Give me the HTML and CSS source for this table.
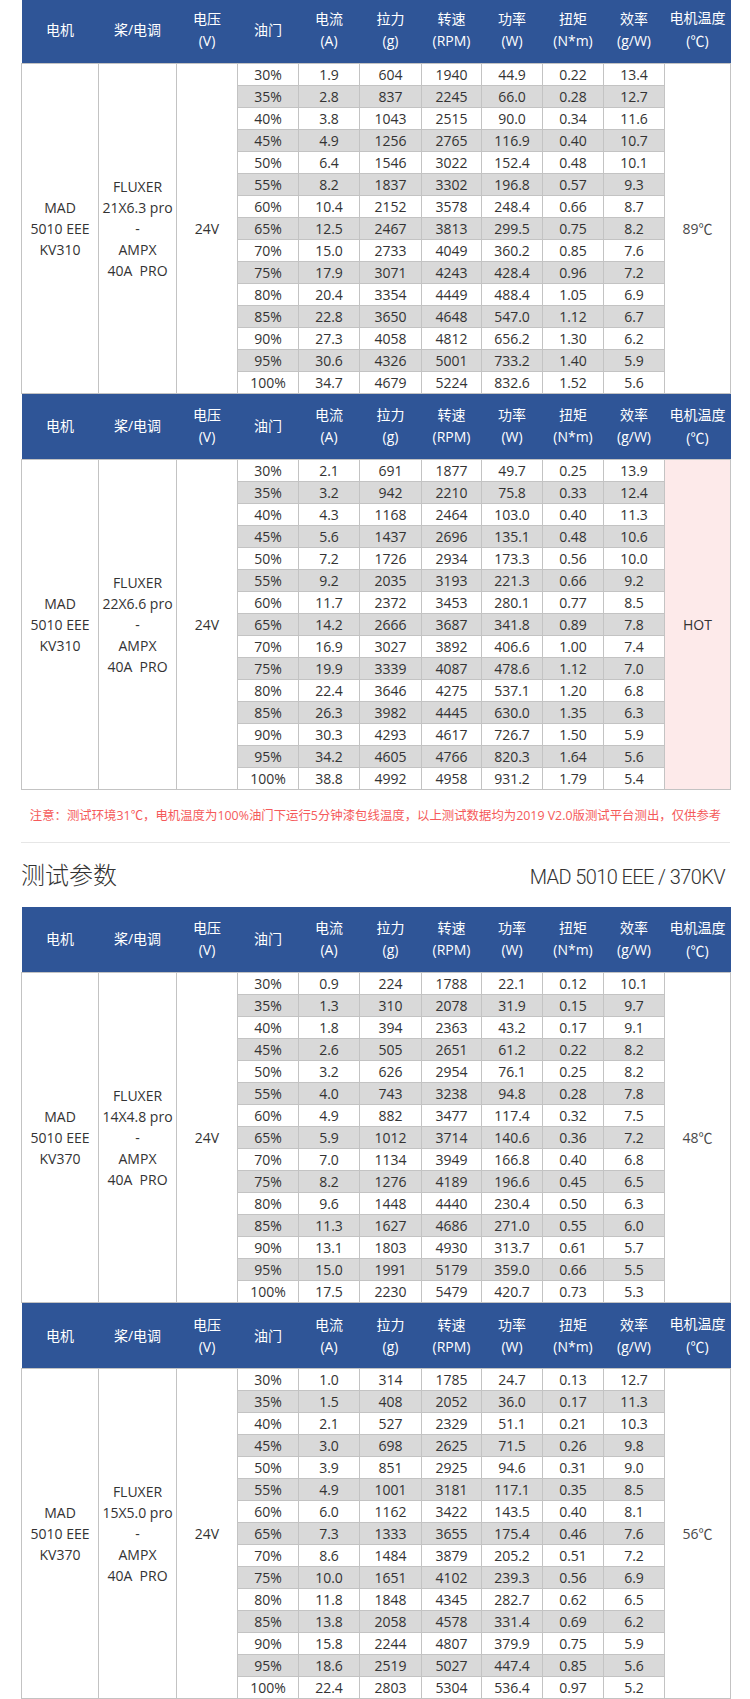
FILE: index.html
```html
<!DOCTYPE html>
<html lang="zh">
<head>
<meta charset="utf-8">
<title>测试参数</title>
<link rel="stylesheet" href="styles.css">
</head>
<body>
<div class="page">
<table class="spec">
<colgroup><col class="c-motor"><col class="c-prop"><col class="c-v"><col class="c-n"><col class="c-n"><col class="c-f"><col class="c-r"><col class="c-n"><col class="c-n"><col class="c-n"><col class="c-t"></colgroup>
<tbody>
<tr class="hd cut"><th>电机</th><th>桨/电调</th><th>电压<br>(V)</th><th>油门</th><th>电流<br>(A)</th><th>拉力<br>(g)</th><th>转速<br>(RPM)</th><th>功率<br>(W)</th><th>扭矩<br>(N*m)</th><th>效率<br>(g/W)</th><th>电机温度<br>(<span class="deg">℃</span>)</th></tr>
<tr><td rowspan="15" class="m">MAD<br>5010 EEE<br>KV310</td><td rowspan="15" class="m">FLUXER<br>21X6.3 pro<br>-<br>AMPX<br>40A&nbsp; PRO</td><td rowspan="15" class="m">24V</td><td>30%</td><td>1.9</td><td>604</td><td>1940</td><td>44.9</td><td>0.22</td><td>13.4</td><td rowspan="15" class="m temp">89<span class="deg">℃</span></td></tr>
<tr class="alt"><td>35%</td><td>2.8</td><td>837</td><td>2245</td><td>66.0</td><td>0.28</td><td>12.7</td></tr>
<tr><td>40%</td><td>3.8</td><td>1043</td><td>2515</td><td>90.0</td><td>0.34</td><td>11.6</td></tr>
<tr class="alt"><td>45%</td><td>4.9</td><td>1256</td><td>2765</td><td>116.9</td><td>0.40</td><td>10.7</td></tr>
<tr><td>50%</td><td>6.4</td><td>1546</td><td>3022</td><td>152.4</td><td>0.48</td><td>10.1</td></tr>
<tr class="alt"><td>55%</td><td>8.2</td><td>1837</td><td>3302</td><td>196.8</td><td>0.57</td><td>9.3</td></tr>
<tr><td>60%</td><td>10.4</td><td>2152</td><td>3578</td><td>248.4</td><td>0.66</td><td>8.7</td></tr>
<tr class="alt"><td>65%</td><td>12.5</td><td>2467</td><td>3813</td><td>299.5</td><td>0.75</td><td>8.2</td></tr>
<tr><td>70%</td><td>15.0</td><td>2733</td><td>4049</td><td>360.2</td><td>0.85</td><td>7.6</td></tr>
<tr class="alt"><td>75%</td><td>17.9</td><td>3071</td><td>4243</td><td>428.4</td><td>0.96</td><td>7.2</td></tr>
<tr><td>80%</td><td>20.4</td><td>3354</td><td>4449</td><td>488.4</td><td>1.05</td><td>6.9</td></tr>
<tr class="alt"><td>85%</td><td>22.8</td><td>3650</td><td>4648</td><td>547.0</td><td>1.12</td><td>6.7</td></tr>
<tr><td>90%</td><td>27.3</td><td>4058</td><td>4812</td><td>656.2</td><td>1.30</td><td>6.2</td></tr>
<tr class="alt"><td>95%</td><td>30.6</td><td>4326</td><td>5001</td><td>733.2</td><td>1.40</td><td>5.9</td></tr>
<tr><td>100%</td><td>34.7</td><td>4679</td><td>5224</td><td>832.6</td><td>1.52</td><td>5.6</td></tr>
</tbody>
<tbody>
<tr class="hd"><th>电机</th><th>桨/电调</th><th>电压<br>(V)</th><th>油门</th><th>电流<br>(A)</th><th>拉力<br>(g)</th><th>转速<br>(RPM)</th><th>功率<br>(W)</th><th>扭矩<br>(N*m)</th><th>效率<br>(g/W)</th><th>电机温度<br>(<span class="deg">℃</span>)</th></tr>
<tr><td rowspan="15" class="m">MAD<br>5010 EEE<br>KV310</td><td rowspan="15" class="m">FLUXER<br>22X6.6 pro<br>-<br>AMPX<br>40A&nbsp; PRO</td><td rowspan="15" class="m">24V</td><td>30%</td><td>2.1</td><td>691</td><td>1877</td><td>49.7</td><td>0.25</td><td>13.9</td><td rowspan="15" class="m hot">HOT</td></tr>
<tr class="alt"><td>35%</td><td>3.2</td><td>942</td><td>2210</td><td>75.8</td><td>0.33</td><td>12.4</td></tr>
<tr><td>40%</td><td>4.3</td><td>1168</td><td>2464</td><td>103.0</td><td>0.40</td><td>11.3</td></tr>
<tr class="alt"><td>45%</td><td>5.6</td><td>1437</td><td>2696</td><td>135.1</td><td>0.48</td><td>10.6</td></tr>
<tr><td>50%</td><td>7.2</td><td>1726</td><td>2934</td><td>173.3</td><td>0.56</td><td>10.0</td></tr>
<tr class="alt"><td>55%</td><td>9.2</td><td>2035</td><td>3193</td><td>221.3</td><td>0.66</td><td>9.2</td></tr>
<tr><td>60%</td><td>11.7</td><td>2372</td><td>3453</td><td>280.1</td><td>0.77</td><td>8.5</td></tr>
<tr class="alt"><td>65%</td><td>14.2</td><td>2666</td><td>3687</td><td>341.8</td><td>0.89</td><td>7.8</td></tr>
<tr><td>70%</td><td>16.9</td><td>3027</td><td>3892</td><td>406.6</td><td>1.00</td><td>7.4</td></tr>
<tr class="alt"><td>75%</td><td>19.9</td><td>3339</td><td>4087</td><td>478.6</td><td>1.12</td><td>7.0</td></tr>
<tr><td>80%</td><td>22.4</td><td>3646</td><td>4275</td><td>537.1</td><td>1.20</td><td>6.8</td></tr>
<tr class="alt"><td>85%</td><td>26.3</td><td>3982</td><td>4445</td><td>630.0</td><td>1.35</td><td>6.3</td></tr>
<tr><td>90%</td><td>30.3</td><td>4293</td><td>4617</td><td>726.7</td><td>1.50</td><td>5.9</td></tr>
<tr class="alt"><td>95%</td><td>34.2</td><td>4605</td><td>4766</td><td>820.3</td><td>1.64</td><td>5.6</td></tr>
<tr><td>100%</td><td>38.8</td><td>4992</td><td>4958</td><td>931.2</td><td>1.79</td><td>5.4</td></tr>
</tbody>
</table>

<p class="note">注意：测试环境31<span class="deg">℃</span>，电机温度为100%油门下运行5分钟漆包线温度，以上测试数据均为2019 V2.0版测试平台测出，仅供参考</p>
<div class="rule"></div>

<div class="titlebar">
<h2 class="title">测试参数</h2>
<span class="model">MAD 5010 EEE / 370KV</span>
</div>

<table class="spec">
<colgroup><col class="c-motor"><col class="c-prop"><col class="c-v"><col class="c-n"><col class="c-n"><col class="c-f"><col class="c-r"><col class="c-n"><col class="c-n"><col class="c-n"><col class="c-t"></colgroup>
<tbody>
<tr class="hd"><th>电机</th><th>桨/电调</th><th>电压<br>(V)</th><th>油门</th><th>电流<br>(A)</th><th>拉力<br>(g)</th><th>转速<br>(RPM)</th><th>功率<br>(W)</th><th>扭矩<br>(N*m)</th><th>效率<br>(g/W)</th><th>电机温度<br>(<span class="deg">℃</span>)</th></tr>
<tr><td rowspan="15" class="m">MAD<br>5010 EEE<br>KV370</td><td rowspan="15" class="m">FLUXER<br>14X4.8 pro<br>-<br>AMPX<br>40A&nbsp; PRO</td><td rowspan="15" class="m">24V</td><td>30%</td><td>0.9</td><td>224</td><td>1788</td><td>22.1</td><td>0.12</td><td>10.1</td><td rowspan="15" class="m temp">48<span class="deg">℃</span></td></tr>
<tr class="alt"><td>35%</td><td>1.3</td><td>310</td><td>2078</td><td>31.9</td><td>0.15</td><td>9.7</td></tr>
<tr><td>40%</td><td>1.8</td><td>394</td><td>2363</td><td>43.2</td><td>0.17</td><td>9.1</td></tr>
<tr class="alt"><td>45%</td><td>2.6</td><td>505</td><td>2651</td><td>61.2</td><td>0.22</td><td>8.2</td></tr>
<tr><td>50%</td><td>3.2</td><td>626</td><td>2954</td><td>76.1</td><td>0.25</td><td>8.2</td></tr>
<tr class="alt"><td>55%</td><td>4.0</td><td>743</td><td>3238</td><td>94.8</td><td>0.28</td><td>7.8</td></tr>
<tr><td>60%</td><td>4.9</td><td>882</td><td>3477</td><td>117.4</td><td>0.32</td><td>7.5</td></tr>
<tr class="alt"><td>65%</td><td>5.9</td><td>1012</td><td>3714</td><td>140.6</td><td>0.36</td><td>7.2</td></tr>
<tr><td>70%</td><td>7.0</td><td>1134</td><td>3949</td><td>166.8</td><td>0.40</td><td>6.8</td></tr>
<tr class="alt"><td>75%</td><td>8.2</td><td>1276</td><td>4189</td><td>196.6</td><td>0.45</td><td>6.5</td></tr>
<tr><td>80%</td><td>9.6</td><td>1448</td><td>4440</td><td>230.4</td><td>0.50</td><td>6.3</td></tr>
<tr class="alt"><td>85%</td><td>11.3</td><td>1627</td><td>4686</td><td>271.0</td><td>0.55</td><td>6.0</td></tr>
<tr><td>90%</td><td>13.1</td><td>1803</td><td>4930</td><td>313.7</td><td>0.61</td><td>5.7</td></tr>
<tr class="alt"><td>95%</td><td>15.0</td><td>1991</td><td>5179</td><td>359.0</td><td>0.66</td><td>5.5</td></tr>
<tr><td>100%</td><td>17.5</td><td>2230</td><td>5479</td><td>420.7</td><td>0.73</td><td>5.3</td></tr>
</tbody>
<tbody>
<tr class="hd"><th>电机</th><th>桨/电调</th><th>电压<br>(V)</th><th>油门</th><th>电流<br>(A)</th><th>拉力<br>(g)</th><th>转速<br>(RPM)</th><th>功率<br>(W)</th><th>扭矩<br>(N*m)</th><th>效率<br>(g/W)</th><th>电机温度<br>(<span class="deg">℃</span>)</th></tr>
<tr><td rowspan="15" class="m">MAD<br>5010 EEE<br>KV370</td><td rowspan="15" class="m">FLUXER<br>15X5.0 pro<br>-<br>AMPX<br>40A&nbsp; PRO</td><td rowspan="15" class="m">24V</td><td>30%</td><td>1.0</td><td>314</td><td>1785</td><td>24.7</td><td>0.13</td><td>12.7</td><td rowspan="15" class="m temp">56<span class="deg">℃</span></td></tr>
<tr class="alt"><td>35%</td><td>1.5</td><td>408</td><td>2052</td><td>36.0</td><td>0.17</td><td>11.3</td></tr>
<tr><td>40%</td><td>2.1</td><td>527</td><td>2329</td><td>51.1</td><td>0.21</td><td>10.3</td></tr>
<tr class="alt"><td>45%</td><td>3.0</td><td>698</td><td>2625</td><td>71.5</td><td>0.26</td><td>9.8</td></tr>
<tr><td>50%</td><td>3.9</td><td>851</td><td>2925</td><td>94.6</td><td>0.31</td><td>9.0</td></tr>
<tr class="alt"><td>55%</td><td>4.9</td><td>1001</td><td>3181</td><td>117.1</td><td>0.35</td><td>8.5</td></tr>
<tr><td>60%</td><td>6.0</td><td>1162</td><td>3422</td><td>143.5</td><td>0.40</td><td>8.1</td></tr>
<tr class="alt"><td>65%</td><td>7.3</td><td>1333</td><td>3655</td><td>175.4</td><td>0.46</td><td>7.6</td></tr>
<tr><td>70%</td><td>8.6</td><td>1484</td><td>3879</td><td>205.2</td><td>0.51</td><td>7.2</td></tr>
<tr class="alt"><td>75%</td><td>10.0</td><td>1651</td><td>4102</td><td>239.3</td><td>0.56</td><td>6.9</td></tr>
<tr><td>80%</td><td>11.8</td><td>1848</td><td>4345</td><td>282.7</td><td>0.62</td><td>6.5</td></tr>
<tr class="alt"><td>85%</td><td>13.8</td><td>2058</td><td>4578</td><td>331.4</td><td>0.69</td><td>6.2</td></tr>
<tr><td>90%</td><td>15.8</td><td>2244</td><td>4807</td><td>379.9</td><td>0.75</td><td>5.9</td></tr>
<tr class="alt"><td>95%</td><td>18.6</td><td>2519</td><td>5027</td><td>447.4</td><td>0.85</td><td>5.6</td></tr>
<tr><td>100%</td><td>22.4</td><td>2803</td><td>5304</td><td>536.4</td><td>0.97</td><td>5.2</td></tr>
</tbody>
</table>
<div class="next"></div>
</div>
</body>
</html>
```

FILE: styles.css
```css
html, body {
  margin: 0;
  padding: 0;
  background: #ffffff;
}

body {
  font-family: "Open Sans", "Noto Sans CJK SC", sans-serif;
  color: #333333;
}

.page {
  padding: 0 20px 0 21px;
}

.spec {
  width: 709px;
  border-collapse: collapse;
  table-layout: fixed;
}

.c-motor { width: 77px; }
.c-prop { width: 78px; }
.c-v { width: 61px; }
.c-n { width: 61px; }
.c-f { width: 62px; }
.c-r { width: 60px; }
.c-t { width: 66px; }

.spec th {
  background: #2f5597;
  color: #ffffff;
  font-weight: normal;
  font-size: 14px;
  line-height: 22px;
  padding: 0;
  text-align: center;
  vertical-align: middle;
  font-family: "Open Sans", "Noto Sans CJK SC", sans-serif;
}

.spec tr.hd {
  height: 66px;
}

.spec tr.hd.cut {
  height: 63px;
}

.spec tr.hd.cut th {
  padding-bottom: 3px;
}

.spec tr {
  height: 22px;
}

.spec td {
  border: 1px solid #c3c3c3;
  padding: 0;
  text-align: center;
  vertical-align: middle;
  font-size: 14px;
  line-height: 19px;
  color: #333333;
  background: #ffffff;
  white-space: nowrap;
}

.spec tr.alt td {
  background: #d9d9d9;
}

.spec td.m {
  line-height: 21px;
  background: #ffffff;
}

.spec td.temp {
  color: #4a4a4a;
}

.spec td.hot {
  background: #fdeaea;
  color: #333333;
}

.deg {
  font-family: "Noto Sans CJK SC", sans-serif;
}

.note {
  margin: 15px 0 0;
  text-align: center;
  color: #f55a5a;
  font-size: 12.4px;
  line-height: 20px;
  font-family: "Open Sans", "Noto Sans CJK SC", sans-serif;
  white-space: nowrap;
}

.rule {
  height: 1px;
  background: #e6e6e6;
  margin-top: 16px;
  width: 709px;
}

.titlebar {
  display: flex;
  justify-content: space-between;
  align-items: baseline;
  padding: 15px 5px 0 0;
  margin-bottom: 17px;
  width: 704px;
}

.title {
  margin: 0;
  font-family: "Noto Sans CJK SC", sans-serif;
  font-weight: 300;
  font-size: 24px;
  line-height: 32px;
  color: #333333;
}

.model {
  font-family: Roboto, "Open Sans", sans-serif;
  font-weight: 300;
  font-size: 20px;
  letter-spacing: -0.6px;
  color: #333333;
}

.next {
  height: 1px;
  width: 709px;
  background: #2f5597;
}
```
